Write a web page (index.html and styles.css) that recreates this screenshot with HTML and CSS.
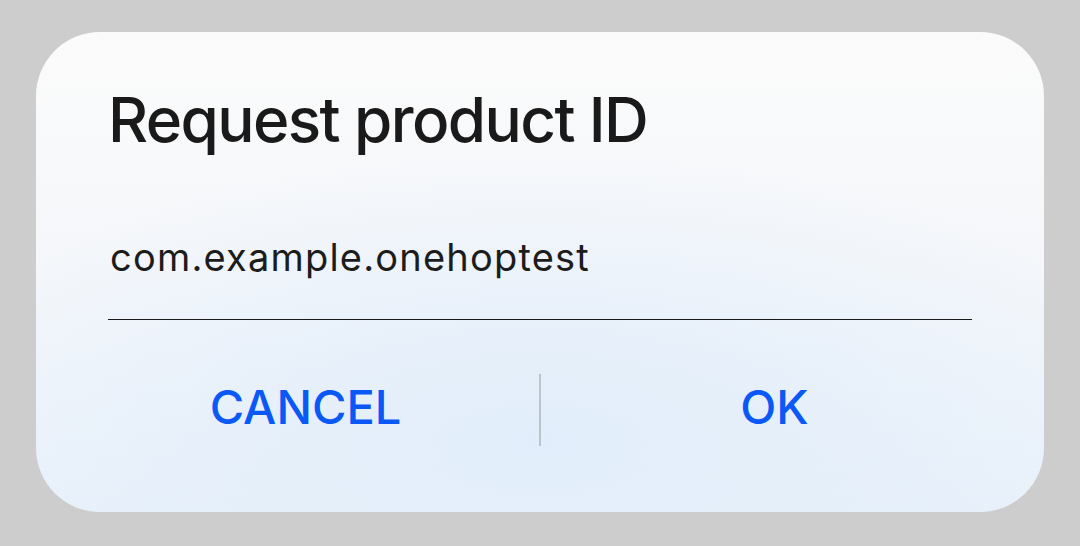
FILE: index.html
```html
<!DOCTYPE html>
<html>
<head>
<meta charset="utf-8">
<link rel="stylesheet" href="styles.css">
</head>
<body>
<div class="dialog">
  <div class="title">Request product ID</div>
  <div class="field">com.example.onehoptest</div>
  <div class="buttons">
    <div class="btn">CANCEL</div>
    <div class="sep"></div>
    <div class="btn">OK</div>
  </div>
</div>
</body>
</html>
```
FILE: styles.css
```css
html, body {
  margin: 0;
  padding: 0;
}
body {
  width: 1080px;
  height: 546px;
  background: #cdcdcd;
  box-sizing: border-box;
  padding: 32px 36px 0 36px;
  font-family: Inter, "Noto Sans", sans-serif;
}
.dialog {
  width: 1008px;
  height: 480px;
  box-sizing: border-box;
  border-radius: 64px;
  padding: 48px 72px 0 72px;
  background:
    radial-gradient(ellipse 65% 60% at 50% 85%, rgba(225, 237, 250, 1) 0%, rgba(225, 237, 250, 0) 100%),
    linear-gradient(180deg, #fbfbfb 0%, #f3f6fa 60%, #eaf2fa 100%);
}
.title {
  font-size: 62px;
  line-height: 80px;
  font-weight: 500;
  color: #1a1a1a;
  white-space: nowrap;
  letter-spacing: -1.6px;
}
.field {
  margin-top: 72px;
  font-size: 38px;
  line-height: 50px;
  color: #1c1c1c;
  padding-bottom: 37px;
  border-bottom: 1px solid #1a1a1a;
  padding-left: 2px;
  letter-spacing: 1.2px;
  white-space: nowrap;
}
.buttons {
  display: flex;
  margin: 54px -36px 0 -36px;
  height: 72px;
}
.btn {
  flex: 1;
  display: flex;
  align-items: center;
  justify-content: center;
  font-size: 47px;
  font-weight: 500;
  color: #0a59f7;
  padding-bottom: 8px;
}
.sep {
  width: 2px;
  background: #bcc3cb;
}
```
